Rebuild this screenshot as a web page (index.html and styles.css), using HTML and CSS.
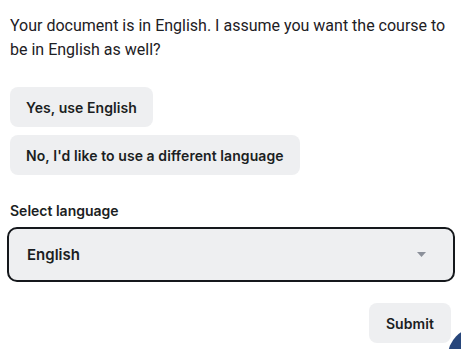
FILE: index.html
```html
<!DOCTYPE html>
<html lang="en">
<head>
<meta charset="utf-8">
<title>Course language</title>
<link rel="stylesheet" href="styles.css">
</head>
<body>
<main class="chat">
  <p class="message">Your document is in English. I assume you want the course to be in English as well?</p>
  <div class="choices">
    <button class="chip" type="button">Yes, use English</button>
    <button class="chip" type="button">No, I'd like to use a different language</button>
  </div>
  <form class="lang-form">
    <label class="field-label" for="lang">Select language</label>
    <div class="select-box">
      <span class="select-value">English</span>
      <svg class="caret" width="9" height="5" viewBox="0 0 9 5" aria-hidden="true"><path d="M0 0H9L4.5 5Z" fill="#8b909a"/></svg>
    </div>
    <div class="actions">
      <button class="chip" type="button">Submit</button>
    </div>
  </form>
</main>
<div class="fab-clip" aria-hidden="true"><div class="fab"></div></div>
</body>
</html>
```

FILE: styles.css
```css
html, body {
  margin: 0;
  padding: 0;
  background: #ffffff;
  overflow: hidden;
}
body {
  width: 461px;
  height: 349px;
  position: relative;
  font-family: Roboto, "Liberation Sans", sans-serif;
  color: #1d2024;
}
.chat {
  padding: 14px 10px 0 10px;
}
.message {
  margin: 0;
  font-size: 16px;
  line-height: 24px;
  color: #1d2024;
}
.choices {
  margin-top: 25px;
  display: flex;
  flex-direction: column;
  align-items: flex-start;
  gap: 8px;
}
.chip {
  font-family: Inter, "Open Sans", sans-serif;
  font-weight: 600;
  font-size: 14px;
  letter-spacing: 0.08px;
  color: #1b1e22;
  background: #eeeff1;
  border: none;
  border-radius: 8px;
  height: 40px;
  padding: 0 16px;
  cursor: pointer;
}
.lang-form {
  margin-top: 26px;
  display: flex;
  flex-direction: column;
}
.field-label {
  font-family: Inter, "Open Sans", sans-serif;
  font-weight: 600;
  font-size: 14px;
  line-height: 20px;
  color: #1b1e22;
}
.select-box {
  margin: 6px -4px 0 -3px;
  height: 51px;
  border: 2px solid #15181c;
  border-radius: 10px;
  background: #eeeff1;
  display: flex;
  align-items: center;
  justify-content: space-between;
  padding: 0 27px 0 18px;
}
.select-value {
  font-family: Inter, "Open Sans", sans-serif;
  font-weight: 600;
  font-size: 15px;
  color: #1b1e22;
}
.caret {
  display: block;
}
.actions {
  margin-top: 21px;
  display: flex;
  justify-content: flex-end;
}
.actions .chip {
  width: 82px;
  padding: 0;
}
.fab-clip {
  position: absolute;
  right: 0;
  bottom: 0;
  width: 13px;
  height: 21px;
  overflow: hidden;
}
.fab {
  position: absolute;
  left: 0;
  top: 0;
  width: 56px;
  height: 56px;
  border-radius: 50%;
  background: #27467b;
}
```
